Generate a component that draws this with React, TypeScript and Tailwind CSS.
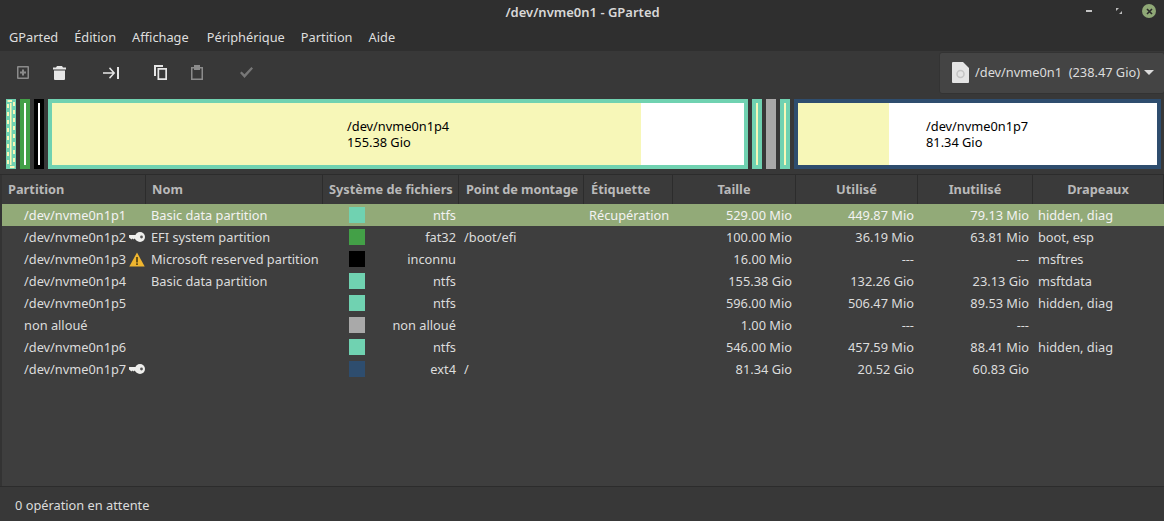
const FONT = { fontFamily: '"Noto Sans", sans-serif' }

const cols = "grid grid-cols-[144px_177px_136px_125px_89px_123px_122px_115px_131px]"

type Row = {
  part: string
  icon?: "key" | "warn"
  name?: string
  color: string
  fs: string
  mount?: string
  label?: string
  size: string
  used: string
  unused: string
  flags?: string
  selected?: boolean
}

const rows: Row[] = [
  { part: "/dev/nvme0n1p1", name: "Basic data partition", color: "bg-[#70d2b1]", fs: "ntfs", label: "Récupération", size: "529.00 Mio", used: "449.87 Mio", unused: "79.13 Mio", flags: "hidden, diag", selected: true },
  { part: "/dev/nvme0n1p2", icon: "key", name: "EFI system partition", color: "bg-[#43a047]", fs: "fat32", mount: "/boot/efi", size: "100.00 Mio", used: "36.19 Mio", unused: "63.81 Mio", flags: "boot, esp" },
  { part: "/dev/nvme0n1p3", icon: "warn", name: "Microsoft reserved partition", color: "bg-black", fs: "inconnu", size: "16.00 Mio", used: "---", unused: "---", flags: "msftres" },
  { part: "/dev/nvme0n1p4", name: "Basic data partition", color: "bg-[#70d2b1]", fs: "ntfs", size: "155.38 Gio", used: "132.26 Gio", unused: "23.13 Gio", flags: "msftdata" },
  { part: "/dev/nvme0n1p5", color: "bg-[#70d2b1]", fs: "ntfs", size: "596.00 Mio", used: "506.47 Mio", unused: "89.53 Mio", flags: "hidden, diag" },
  { part: "non alloué", color: "bg-[#a9a9a9]", fs: "non alloué", size: "1.00 Mio", used: "---", unused: "---" },
  { part: "/dev/nvme0n1p6", color: "bg-[#70d2b1]", fs: "ntfs", size: "546.00 Mio", used: "457.59 Mio", unused: "88.41 Mio", flags: "hidden, diag" },
  { part: "/dev/nvme0n1p7", icon: "key", color: "bg-[#2e4d6e]", fs: "ext4", mount: "/", size: "81.34 Gio", used: "20.52 Gio", unused: "60.83 Gio" },
]

const headers = [
  { t: "Partition", c: "pl-[6px]" },
  { t: "Nom", c: "pl-[6px]" },
  { t: "Système de fichiers", c: "pl-[6px]" },
  { t: "Point de montage", c: "pl-[7px] tracking-[-0.1px]" },
  { t: "Étiquette", c: "pl-[7px]" },
  { t: "Taille", c: "justify-center" },
  { t: "Utilisé", c: "justify-center" },
  { t: "Inutilisé", c: "justify-center" },
  { t: "Drapeaux", c: "justify-center" },
]

function KeyIcon() {
  return (
    <svg width="16" height="10" viewBox="0 0 16 10" className="shrink-0 -mt-[2px]">
      <path d="M0 3h9v4.500H6.500L5.500 6.500 4.500 7.500 3.500 6.500 2.500 7.500 0 5.500z" fill="#eeeeec" />
      <circle cx="11" cy="5" r="5" fill="#eeeeec" />
      <circle cx="12.500" cy="5" r="1.400" fill="#555" />
    </svg>
  )
}

function WarnIcon() {
  return (
    <svg width="16" height="15" viewBox="0 0 16 15" className="shrink-0 -mt-[2px]">
      <path d="M8 .5L15.700 14.500H.3z" fill="#f0b62f" />
      <rect x="7.200" y="5" width="1.600" height="5.500" fill="#4a3a10" />
      <rect x="7.200" y="11.300" width="1.600" height="1.700" fill="#4a3a10" />
    </svg>
  )
}

function TinyPartition() {
  const left = [5, 13, 21, 29, 37, 45, 53, 61]
  const right = [3, 11, 19, 27, 35, 43, 51, 59]
  return (
    <svg width="10" height="70" viewBox="0 0 10 70" className="shrink-0">
      <rect width="10" height="70" fill="#70d2b1" />
      <rect x="1.500" y="1" width="4.500" height="2" fill="#f7f7b8" />
      <rect x="4" y="4" width="1.500" height="62" fill="#f7f7b8" />
      <rect x="4" y="67" width="4.500" height="2" fill="#f7f7b8" />
      {left.map(y => <rect key={y} x="1" y={y} width="2" height="4" fill="#f7f7b8" />)}
      {right.map(y => <rect key={y} x="7" y={y} width="2" height="4" fill="#f7f7b8" />)}
    </svg>
  )
}

export default function App() {
  return (
    <div className="w-[1164px] h-[521px] overflow-hidden flex flex-col bg-[#3e3e3e] text-[12.8px] text-[#dcdcdc]" style={FONT}>
      {/* titlebar */}
      <div className="h-[25px] bg-[#2f2f2f] flex items-center relative shrink-0">
        <div className="flex-1 text-center text-[13px] font-semibold text-[#d8d8d8] pl-[1px]">/dev/nvme0n1 - GParted</div>
        <div className="absolute right-[8px] top-[4px] flex items-center">
          <div className="w-[6px] h-[2px] bg-[#c4c4c4] mr-[24px]" />
          <svg width="6" height="6" viewBox="0 0 6 6" className="mr-[20px]">
            <path d="M0 3V0h3zM6 3V6H3z" fill="#bdbdbd" />
          </svg>
          <div className="w-[14px] h-[14px] rounded-full bg-[#8fa876] flex items-center justify-center">
            <svg width="7" height="7" viewBox="0 0 7 7">
              <path d="M1 1l5 5M6 1L1 6" stroke="#2a2a2a" strokeWidth="1.600" />
            </svg>
          </div>
        </div>
      </div>
      {/* menu */}
      <div className="h-[26px] bg-[#2f2f2f] flex items-center gap-[16px] pl-[9px] shrink-0 text-[#dedede]">
        <span>GParted</span>
        <span>Édition</span>
        <span className="mr-[2px]">Affichage</span>
        <span>Périphérique</span>
        <span>Partition</span>
        <span>Aide</span>
      </div>
      {/* toolbar */}
      <div className="h-[43px] bg-[#383838] flex items-center shrink-0 relative">
        <div className="flex items-center pl-[17px]">
          <svg width="12" height="13" viewBox="0 0 12 13" className="mr-[24px]">
            <path fillRule="evenodd" d="M1 0h10a1 1 0 011 1v11a1 1 0 01-1 1H1a1 1 0 01-1-1V1a1 1 0 011-1zm.5 1.500v10h9v-10zM5 3.500h2v2h2v2H7v2H5v-2H3v-2h2z" fill="#8b8b8b" />
          </svg>
          <svg width="13" height="14" viewBox="0 0 13 14" className="mr-[37px]">
            <path d="M4 0h5l1 1.500h3v2H0v-2h3zM1 4.500h11V13a1 1 0 01-1 1H2a1 1 0 01-1-1z" fill="#e6e6e6" />
          </svg>
          <svg width="16" height="12" viewBox="0 0 16 12" className="mr-[35px]">
            <path d="M0 5.200h9.500L6 1.500 7 .3 12.200 6 7 11.700 6 10.500l3.500-3.700H0zM14 0h2v12h-2z" fill="#e6e6e6" />
          </svg>
          <svg width="13" height="15" viewBox="0 0 13 15" className="mr-[24px]">
            <path fillRule="evenodd" d="M0 0h9v2H2v9H0zM3.500 3H13v12H3.500zm1.700 1.700v8.600h6.100V4.700z" fill="#e6e6e6" />
          </svg>
          <svg width="12" height="15" viewBox="0 0 12 15" className="mr-[37px]">
            <path fillRule="evenodd" d="M0 2h3V0h6v2h3v13H0zm1.500 1.500v10h9v-10H9V5H3V3.500z" fill="#8b8b8b" />
          </svg>
          <svg width="13" height="11" viewBox="0 0 13 11">
            <path d="M0 6l1.600-1.600L4.500 7.300 11.400 0 13 1.600 4.500 11z" fill="#777" />
          </svg>
        </div>
        <div className="ml-auto mr-[-1px] w-[226px] h-[42px] bg-[#444444] border border-[#333] rounded-[3px] flex items-center pl-[12px] text-[#dcdcdc]">
          <svg width="17" height="21" viewBox="0 0 17 21" className="mr-[6px] shrink-0">
            <path d="M1 0h10l6 6v14a1 1 0 01-1 1H1a1 1 0 01-1-1V1a1 1 0 011-1z" fill="#e4e4e4" />
            <circle cx="8.500" cy="12" r="3.500" fill="none" stroke="#c4c4c4" strokeWidth="1.500" />
          </svg>
          <span className="whitespace-pre">/dev/nvme0n1  (238.47 Gio)</span>
          <svg width="10" height="5" viewBox="0 0 10 5" className="ml-[4px]">
            <path d="M0 0h10L5 5z" fill="#dcdcdc" />
          </svg>
        </div>
      </div>
      {/* partition map */}
      <div className="h-[80px] bg-[#383838] flex gap-1 pl-[6px] pr-[3px] pt-[5px] pb-[5px] shrink-0 text-black">
        <TinyPartition />
        <div className="w-[10px] h-full shrink-0 border-4 border-[#43a047] bg-white" />
        <div className="w-[10px] h-full shrink-0 border-4 border-black bg-white" />
        <div className="w-[700px] h-full shrink-0 border-4 border-[#70d2b1] bg-white flex relative">
          <div className="w-[589px] h-full bg-[#f7f7b8]" />
          <div className="absolute left-[295px] top-[15px] leading-[16px]">
            <div>/dev/nvme0n1p4</div>
            <div>155.38 Gio</div>
          </div>
        </div>
        <div className="w-[10px] h-full shrink-0 border-4 border-[#70d2b1] bg-[#f7f7b8]" />
        <div className="w-[10px] h-full shrink-0 bg-[#a9a9a9]" />
        <div className="w-[10px] h-full shrink-0 border-4 border-[#70d2b1] bg-[#f7f7b8]" />
        <div className="flex-1 h-full border-4 border-[#2e4d6e] bg-white flex relative">
          <div className="w-[91px] h-full bg-[#f7f7b8]" />
          <div className="absolute left-[128px] top-[15px] leading-[16px]">
            <div>/dev/nvme0n1p7</div>
            <div>81.34 Gio</div>
          </div>
        </div>
      </div>
      {/* table header */}
      <div className="pl-[2px] bg-[#333333] border-t border-[#2c2c2c] shrink-0">
        <div className={`${cols} h-[29px] font-bold text-[#b9b9b9] bg-[#3a3a3a]`}>
          {headers.map(h => (
            <div key={h.t} className={`flex items-center border-r border-[#2c2c2c] whitespace-nowrap overflow-hidden ${h.c}`}>{h.t}</div>
          ))}
        </div>
      </div>
      {/* rows */}
      <div className="flex-1 pl-[2px] bg-[#333333]">
        <div className="h-full bg-[#3e3e3e]">
          {rows.map(r => (
            <div key={r.part} className={`${cols} h-[22px] pt-[2px] items-center whitespace-nowrap ${r.selected ? "bg-[#92aa78] text-[#f2f2f2]" : ""}`}>
              <div className="flex items-center pl-[22px]">
                <span className="w-[105px] shrink-0">{r.part}</span>
                {r.icon === "key" && <KeyIcon />}
                {r.icon === "warn" && <WarnIcon />}
              </div>
              <div className="pl-[5px]">{r.name}</div>
              <div className="flex items-center justify-between pl-[26px] pr-[3px]">
                <div className={`w-[16px] h-[16px] -mt-[2px] ${r.color}`} />
                <span>{r.fs}</span>
              </div>
              <div className="pl-[5px]">{r.mount}</div>
              <div className="pl-[5px]">{r.label}</div>
              <div className="text-right pr-[4px]">{r.size}</div>
              <div className="text-right pr-[4px]">{r.used}</div>
              <div className="text-right pr-[4px]">{r.unused}</div>
              <div className="pl-[5px]">{r.flags}</div>
            </div>
          ))}
        </div>
      </div>
      {/* status */}
      <div className="h-[35px] bg-[#383838] border-t border-[#2c2c2c] flex items-center pl-[15px] pt-[3px] shrink-0">
        0 opération en attente
      </div>
    </div>
  )
}
